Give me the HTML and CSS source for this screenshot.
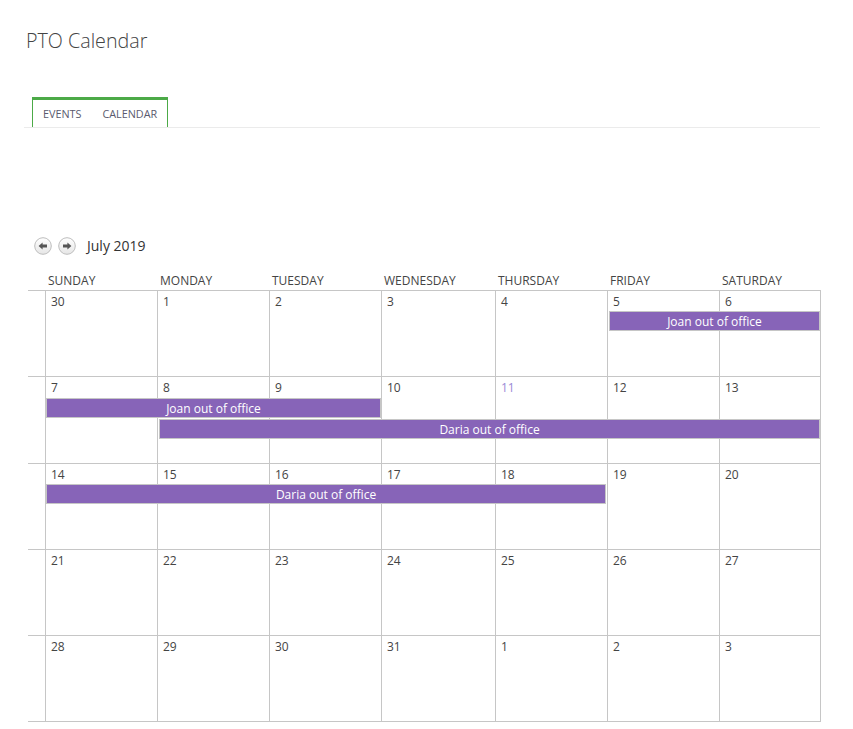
FILE: index.html
```html
<!DOCTYPE html>
<html>
<head>
<meta charset="utf-8">
<title>PTO Calendar</title>
<link rel="stylesheet" href="styles.css">
</head>
<body>
<div class="page">
  <h1 class="title">PTO Calendar</h1>
  <div class="tabbar">
    <div class="tab">
      <span class="tab-item">EVENTS</span>
      <span class="tab-item">CALENDAR</span>
    </div>
  </div>

  <div class="nav">
    <span class="navbtn">
      <svg width="18" height="18" viewBox="0 0 18 18"><defs><linearGradient id="g1" x1="0" y1="0" x2="0" y2="1"><stop offset="0" stop-color="#ffffff"/><stop offset="1" stop-color="#e6e6e6"/></linearGradient></defs><circle cx="9" cy="9" r="8.3" fill="url(#g1)" stroke="#bdbdbd" stroke-width="1"/><path d="M4.6 9 L8.6 5.4 L8.6 7.6 L13 7.6 L13 10.4 L8.6 10.4 L8.6 12.6 Z" fill="#555"/></svg>
    </span>
    <span class="navbtn">
      <svg width="18" height="18" viewBox="0 0 18 18"><defs><linearGradient id="g2" x1="0" y1="0" x2="0" y2="1"><stop offset="0" stop-color="#ffffff"/><stop offset="1" stop-color="#e6e6e6"/></linearGradient></defs><circle cx="9" cy="9" r="8.3" fill="url(#g2)" stroke="#bdbdbd" stroke-width="1"/><path d="M13.4 9 L9.4 5.4 L9.4 7.6 L5 7.6 L5 10.4 L9.4 10.4 L9.4 12.6 Z" fill="#555"/></svg>
    </span>
    <span class="month">July 2019</span>
  </div>

  <div class="calendar">
    <div class="head">
      <div></div>
      <div class="dn">SUNDAY</div>
      <div class="dn">MONDAY</div>
      <div class="dn">TUESDAY</div>
      <div class="dn">WEDNESDAY</div>
      <div class="dn">THURSDAY</div>
      <div class="dn">FRIDAY</div>
      <div class="dn">SATURDAY</div>
    </div>

    <div class="week">
      <div class="gutter"></div>
      <div class="cell c2"><span class="date">30</span></div>
      <div class="cell c3"><span class="date">1</span></div>
      <div class="cell c4"><span class="date">2</span></div>
      <div class="cell c5"><span class="date">3</span></div>
      <div class="cell c6"><span class="date">4</span></div>
      <div class="cell c7"><span class="date">5</span></div>
      <div class="cell c8 last"><span class="date">6</span></div>
      <div class="ev ev-fri-sat r1">Joan out of office</div>
    </div>

    <div class="week tall">
      <div class="gutter"></div>
      <div class="cell c2"><span class="date">7</span></div>
      <div class="cell c3"><span class="date">8</span></div>
      <div class="cell c4"><span class="date">9</span></div>
      <div class="cell c5"><span class="date">10</span></div>
      <div class="cell c6 today"><span class="date">11</span></div>
      <div class="cell c7"><span class="date">12</span></div>
      <div class="cell c8 last"><span class="date">13</span></div>
      <div class="ev ev-sun-tue r1 first">Joan out of office</div>
      <div class="ev ev-mon-sat r2">Daria out of office</div>
    </div>

    <div class="week">
      <div class="gutter"></div>
      <div class="cell c2"><span class="date">14</span></div>
      <div class="cell c3"><span class="date">15</span></div>
      <div class="cell c4"><span class="date">16</span></div>
      <div class="cell c5"><span class="date">17</span></div>
      <div class="cell c6"><span class="date">18</span></div>
      <div class="cell c7"><span class="date">19</span></div>
      <div class="cell c8 last"><span class="date">20</span></div>
      <div class="ev ev-sun-thu r1 first">Daria out of office</div>
    </div>

    <div class="week">
      <div class="gutter"></div>
      <div class="cell c2"><span class="date">21</span></div>
      <div class="cell c3"><span class="date">22</span></div>
      <div class="cell c4"><span class="date">23</span></div>
      <div class="cell c5"><span class="date">24</span></div>
      <div class="cell c6"><span class="date">25</span></div>
      <div class="cell c7"><span class="date">26</span></div>
      <div class="cell c8 last"><span class="date">27</span></div>
    </div>

    <div class="week lastweek">
      <div class="gutter"></div>
      <div class="cell c2"><span class="date">28</span></div>
      <div class="cell c3"><span class="date">29</span></div>
      <div class="cell c4"><span class="date">30</span></div>
      <div class="cell c5"><span class="date">31</span></div>
      <div class="cell c6"><span class="date">1</span></div>
      <div class="cell c7"><span class="date">2</span></div>
      <div class="cell c8 last"><span class="date">3</span></div>
    </div>
  </div>
</div>
</body>
</html>
```

FILE: styles.css
```css
html, body {
  margin: 0;
  padding: 0;
  background: #ffffff;
}

body {
  font-family: "Open Sans", "Noto Sans", "Liberation Sans", sans-serif;
  color: #444444;
}

.page {
  width: 853px;
}

.title {
  margin: 27px 0 0 26px;
  font-size: 19.7px;
  line-height: 28px;
  font-weight: 300;
  color: #444444;
}

.tabbar {
  margin: 42px 0 0 24px;
  width: 796px;
  border-bottom: 1px solid #ebebeb;
  display: flex;
}

.tab {
  margin-left: 8px;
  display: flex;
  gap: 21px;
  align-items: center;
  height: 27px;
  padding: 0 10px 0 10px;
  border-top: 3px solid #4caa47;
  border-left: 1px solid #4caa47;
  border-right: 1px solid #4caa47;
}

.tab-item {
  font-size: 10.8px;
  line-height: 14px;
  color: #5a5a6e;
}

.nav {
  margin: 109px 0 0 34px;
  display: flex;
  align-items: center;
  height: 18px;
}

.navbtn {
  display: flex;
  width: 18px;
  height: 18px;
  margin-right: 6px;
}

.month {
  margin-left: 5px;
  font-size: 14px;
  line-height: 18px;
  color: #333333;
}

.calendar {
  margin: 15px 0 0 28px;
  width: 793px;
}

.head,
.week {
  display: grid;
  width: 793px;
  grid-template-columns: 17px 112px 112px 112px 114px 112px 112px 102px;
}

.head {
  height: 20px;
}

.dn {
  padding-left: 3px;
  font-size: 12px;
  line-height: 22px;
  color: #444444;
}

.week {
  grid-template-rows: 20px 21px 21px 1fr;
  height: 85px;
  border-top: 1px solid #c6c6c6;
}

.week.tall {
  height: 86px;
  grid-template-rows: 21px 21px 21px 1fr;
}

.week.lastweek {
  border-bottom: 1px solid #c6c6c6;
}

.gutter {
  grid-column: 1;
  grid-row: 1 / -1;
}

.cell {
  grid-row: 1 / -1;
  box-sizing: border-box;
  border-left: 1px solid #c6c6c6;
  padding: 0 5px;
}

.c2 { grid-column: 2; }
.c3 { grid-column: 3; }
.c4 { grid-column: 4; }
.c5 { grid-column: 5; }
.c6 { grid-column: 6; }
.c7 { grid-column: 7; }
.c8 { grid-column: 8; }

.cell.last {
  border-right: 1px solid #c6c6c6;
}

.date {
  display: block;
  padding-top: 2px;
  font-size: 12px;
  line-height: 18px;
  color: #444444;
}

.today {
  box-shadow: inset 1px 1px 0 #ffffff, inset 0 1px 0 #9089ad;
}

.today .date {
  color: #9b8bd6;
}

.ev {
  box-sizing: border-box;
  height: 20px;
  margin: 0 1px 0 2px;
  padding-top: 2px;
  background: #8764b8;
  border: 1px solid #c6c6c6;
  color: #ffffff;
  font-size: 12px;
  line-height: 16px;
  text-align: center;
  white-space: nowrap;
  overflow: hidden;
  position: relative;
  z-index: 1;
}

.ev.first {
  margin-left: 1px;
}

.r1 { grid-row: 2; }
.r2 { grid-row: 3; }

.ev-fri-sat { grid-column: 7 / 9; }
.ev-sun-tue { grid-column: 2 / 5; margin-right: 0; }
.ev-mon-sat { grid-column: 3 / 9; }
.ev-sun-thu { grid-column: 2 / 7; }
```
